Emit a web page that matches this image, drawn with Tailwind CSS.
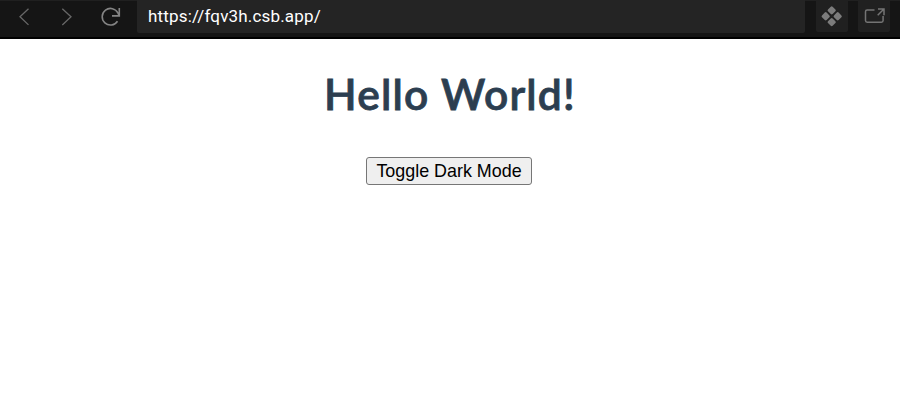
<!DOCTYPE html>
<html lang="en">
<head>
<meta charset="utf-8">
<title>Hello World</title>
<script src="https://cdn.jsdelivr.net/npm/@tailwindcss/browser@4"></script>
</head>
<body class="h-[406px] overflow-hidden bg-white">
<header class="flex h-[39px] items-start border-b-2 border-black bg-[#151515] shadow-[inset_0_1px_0_#202020]">
  <nav class="flex w-[137px] shrink-0">
    <svg class="h-[36px] w-[137px]" viewBox="0 0 137 36" fill="none" stroke-width="1.3">
      <path stroke="#686868" d="M28.5 8.7 20 16.8l8.5 8.1"/>
      <path stroke="#686868" d="m62.3 8.7 8.7 8.1-8.7 8.1"/>
      <path stroke="#858585" stroke-width="1.6" d="M117.5 21.2a8.3 8.3 0 1 1 .4-8.2L119.3 15.8M119.3 8v7.9h-7.3"/>
    </svg>
  </nav>
  <div class="h-[33px] w-[668px] rounded-b-xs bg-[#242424] pl-[11px] font-[Roboto,sans-serif] text-[17px] leading-[32px] text-white"><span class="tracking-[0.17px]">https://fqv3h.csb.app/</span></div>
  <div class="ml-[11px] h-[32px] w-[32px] rounded-b-xs bg-[#202020]">
    <svg class="size-[32px]" viewBox="0 0 32 32" fill="#7c7c7c" stroke="#7c7c7c" stroke-width="2.6" stroke-linejoin="round">
      <path d="m15.7 7.6 2.8 2.8-2.8 2.8-2.8-2.8zM9.7 13.5l2.8 2.8-2.8 2.8-2.8-2.8zM21.7 13.5l2.8 2.8-2.8 2.8-2.8-2.8zM15.7 19.3l2.8 2.8-2.8 2.8-2.8-2.8z"/>
    </svg>
  </div>
  <div class="ml-[10px] h-[32px] w-[32px] rounded-b-xs bg-[#202020]">
    <svg class="size-[32px]" viewBox="0 0 32 32" fill="none" stroke="#747474" stroke-width="1.5">
      <path d="M16.5 10H9.2Q7.5 10 7.5 11.7v8.8q0 1.7 1.7 1.7h14.2q1.7 0 1.7-1.7V16"/>
      <path d="m19.7 15.2 6-6M20 9h6v6.2"/>
    </svg>
  </div>
</header>
<main class="flex flex-col items-center pt-[25px]">
  <h1 class="whitespace-nowrap font-[Lato,sans-serif] text-[42.5px] font-semibold leading-[60px] tracking-[1.2px] text-[#2c3e50] [-webkit-text-stroke:0.8px_#2c3e50]">Hello World!</h1>
  <button class="mt-[33px] mr-[2px] h-[28px] w-[166px] whitespace-nowrap rounded-[3px] border border-[#767676] bg-[#efefef] font-['Liberation_Sans',Arial,sans-serif] text-[17.9px] leading-[26px] text-black">Toggle Dark Mode</button>
</main>
</body>
</html>
